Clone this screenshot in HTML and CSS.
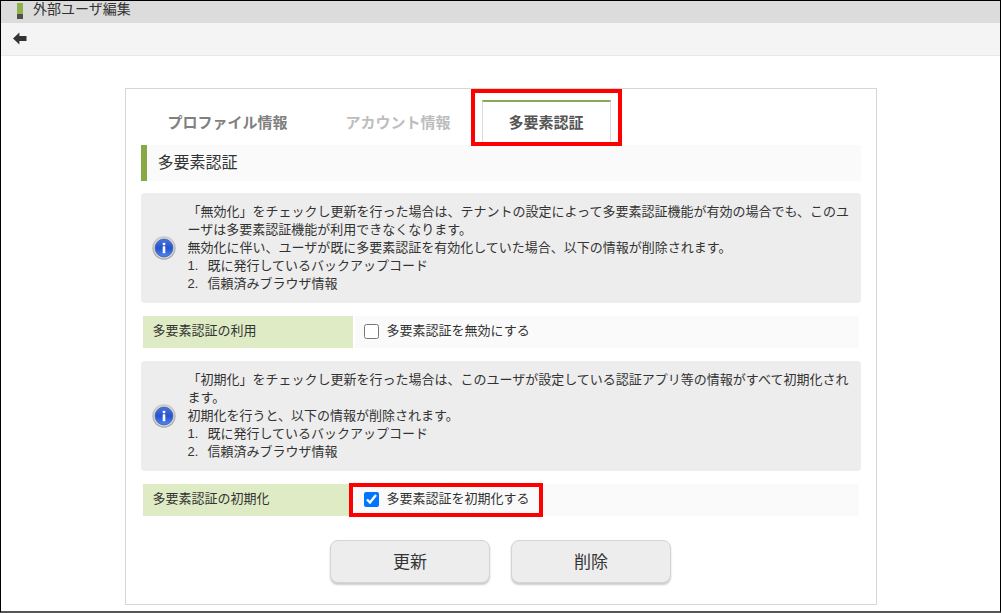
FILE: index.html
```html
<!DOCTYPE html>
<html lang="ja">
<head>
<meta charset="utf-8">
<title>外部ユーザ編集</title>
<link rel="stylesheet" href="styles.css">
</head>
<body>
<svg class="defs" aria-hidden="true">
  <defs>
    <linearGradient id="ring" x1="0" y1="0" x2="0" y2="1">
      <stop offset="0" stop-color="#c9c9c9"/>
      <stop offset="1" stop-color="#a8a8a8"/>
    </linearGradient>
    <linearGradient id="ball" x1="0" y1="0" x2="0" y2="1">
      <stop offset="0" stop-color="#4a76dc"/>
      <stop offset="0.5" stop-color="#2552cf"/>
      <stop offset="1" stop-color="#4f86f0"/>
    </linearGradient>
    <symbol id="info" viewBox="0 0 24 24">
      <circle cx="12" cy="12" r="11.7" fill="url(#ring)"/>
      <circle cx="12" cy="12" r="10.5" fill="#d4d4d4"/>
      <circle cx="12" cy="12" r="8.900" fill="url(#ball)" stroke="#3c5fb5" stroke-width="0.8"/>
      <rect x="10.700" y="6.800" width="2.600" height="2.400" rx="0.800" fill="#fff"/>
      <rect x="10.700" y="10.300" width="2.600" height="7" rx="0.400" fill="#fff"/>
    </symbol>
  </defs>
</svg>
<div class="page">
  <header class="titlebar">
    <span class="mark"></span>
    <h1 class="title">外部ユーザ編集</h1>
  </header>
  <nav class="toolbar">
    <button class="back" type="button" aria-label="戻る">
      <svg width="14" height="13" viewBox="0 0 14 13"><path d="M0 6.500 6.400 0.500V3.900H13.500V9.100H6.400V12.500z" fill="#333"/></svg>
    </button>
  </nav>
  <main class="card">
    <div class="tabs" role="tablist">
      <button class="tab" type="button" role="tab">プロファイル情報</button>
      <button class="tab tab-disabled" type="button" role="tab">アカウント情報</button>
      <button class="tab tab-active" type="button" role="tab" aria-selected="true">多要素認証</button>
    </div>
    <h2 class="section">多要素認証</h2>
    <form class="form">
      <div class="note">
        <svg class="note-icon" width="24" height="24"><use href="#info"/></svg>
        <div class="note-text">
          <p>「無効化」をチェックし更新を行った場合は、テナントの設定によって多要素認証機能が有効の場合でも、このユーザは多要素認証機能が利用できなくなります。</p>
          <p>無効化に伴い、ユーザが既に多要素認証を有効化していた場合、以下の情報が削除されます。</p>
          <ol>
            <li><span class="num">1.</span>既に発行しているバックアップコード</li>
            <li><span class="num">2.</span>信頼済みブラウザ情報</li>
          </ol>
        </div>
      </div>
      <div class="row">
        <div class="row-label">多要素認証の利用</div>
        <div class="row-field">
          <label class="option" for="disable"><input class="check" type="checkbox" id="disable">多要素認証を無効にする</label>
        </div>
      </div>
      <div class="note">
        <svg class="note-icon" width="24" height="24"><use href="#info"/></svg>
        <div class="note-text">
          <p>「初期化」をチェックし更新を行った場合は、このユーザが設定している認証アプリ等の情報がすべて初期化されます。</p>
          <p>初期化を行うと、以下の情報が削除されます。</p>
          <ol>
            <li><span class="num">1.</span>既に発行しているバックアップコード</li>
            <li><span class="num">2.</span>信頼済みブラウザ情報</li>
          </ol>
        </div>
      </div>
      <div class="row">
        <div class="row-label">多要素認証の初期化</div>
        <div class="row-field">
          <label class="option option-marked" for="reset"><input class="check" type="checkbox" id="reset" checked>多要素認証を初期化する</label>
        </div>
      </div>
      <div class="actions">
        <button class="action" type="button">更新</button>
        <button class="action" type="button">削除</button>
      </div>
    </form>
  </main>
</div>
</body>
</html>
```

FILE: styles.css
```css
* {
  box-sizing: border-box;
}

body {
  margin: 0;
  background: #fff;
  color: #333;
  font: 13px/18px "Liberation Sans", "Noto Sans CJK JP", sans-serif;
}

h1, h2, p, ol {
  margin: 0;
  padding: 0;
  font-weight: 400;
}

ol {
  list-style: none;
}

button {
  font-family: inherit;
  cursor: pointer;
}

.defs {
  position: absolute;
  width: 0;
  height: 0;
}

.page {
  min-height: 100vh;
  padding-bottom: 6px;
  border: 1px solid #000;
  border-bottom: 2px solid #555;
}

.titlebar {
  display: flex;
  align-items: flex-start;
  gap: 10px;
  height: 22px;
  padding-left: 16px;
  background: #dcdcdc;
}

.mark {
  width: 6px;
  height: 16px;
  margin-top: 2px;
  background: linear-gradient(#8db24a 11px, #4d5245 11px);
}

.title {
  font-size: 14px;
  line-height: 16px;
}

.toolbar {
  display: flex;
  align-items: center;
  height: 33px;
  padding: 0 12px 2px;
  border-bottom: 1px solid #e8e8e8;
  background: #f4f4f4;
}

.back {
  display: flex;
  padding: 0;
  border: 0;
  background: none;
}

.card {
  width: 80%;
  max-width: 752px;
  margin: 32px auto 0;
  padding: 11px 15px 21px;
  border: 1px solid #d6d6d6;
}

.tabs {
  display: flex;
  gap: 4px;
}

.tab {
  height: 45px;
  padding: 0 26px 4px;
  border: 1px solid transparent;
  border-top-width: 2px;
  background: #fff;
  color: #808080;
  font-size: 15px;
  font-weight: 700;
}

.tab-disabled {
  color: #bdbdbd;
}

.tab-active {
  position: relative;
  border-color: #8aab55 #dcdcdc transparent;
  color: #555;
}

.tab-active::after {
  content: "";
  position: absolute;
  inset: -13px -12px -2px;
  border: 4px solid #f00;
}

.section {
  padding: 6px 11px;
  border-left: 6px solid #87a945;
  background: #fafafa;
  font-size: 16px;
  line-height: 24px;
}

.form {
  display: grid;
  gap: 13px;
  margin-top: 12px;
}

.note {
  display: flex;
  align-items: center;
  gap: 12px;
  padding: 10px 8px 10px 11px;
  border-radius: 4px;
  background: #ededed;
}

.note-icon {
  flex: none;
}

.note-text {
  flex: 1;
}

.num {
  display: inline-block;
  width: 20px;
}

.row {
  display: grid;
  grid-template-columns: 210px 1fr;
  gap: 2px;
  margin: 0 2px;
}

.row-label {
  padding: 6px 10px 8px;
  background: #deebc5;
}

.row-field {
  display: flex;
  align-items: flex-start;
  padding: 6px 9px 8px;
  background: #fafafa;
}

.option {
  display: flex;
  align-items: center;
  position: relative;
  gap: 8px;
}

.check {
  width: 15px;
  height: 15px;
  margin: 0;
  accent-color: #0075ff;
}

.option-marked::after {
  content: "";
  position: absolute;
  inset: -7px -13px -9px -15px;
  border: 4px solid #f00;
}

.actions {
  display: flex;
  justify-content: center;
  gap: 21px;
  margin-top: 11px;
}

.action {
  width: 160px;
  height: 43px;
  padding: 0 0 2px;
  border: 1px solid #d4d4d4;
  border-radius: 8px;
  background: #ededed;
  box-shadow: 0 2px 2px #ccc;
  color: #333;
  font-size: 17px;
}
```
